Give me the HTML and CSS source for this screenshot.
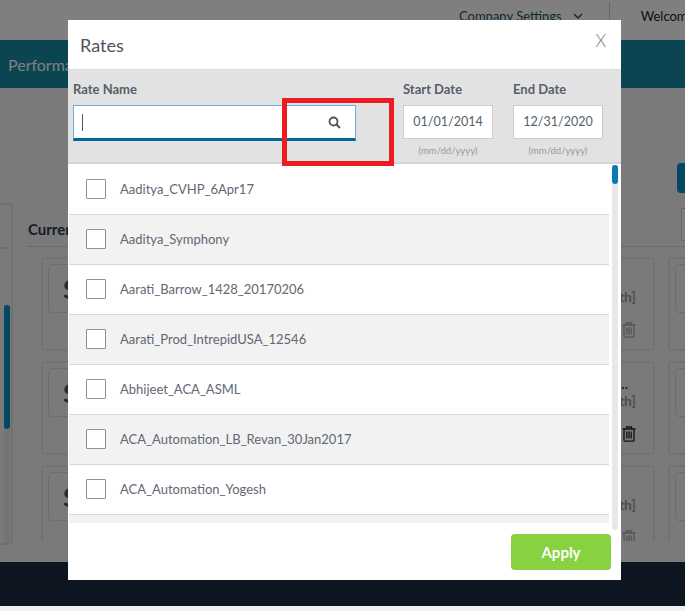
FILE: index.html
```html
<!DOCTYPE html>
<html lang="en">
<head>
    <meta charset="UTF-8">
    <title>Rates</title>
    <link rel="stylesheet" href="styles.css">
</head>
<body>
    <!-- page behind the dialog -->
    <div class="topbar">
        <span class="company">Company Settings</span>
        <svg class="chevron" width="10" height="6" viewBox="0 0 10 6"><path d="M1 1l4 4 4-4" fill="none" stroke="#1c5468" stroke-width="1.4"/></svg>
        <span class="top-sep"></span>
        <span class="welcome">Welcome</span>
    </div>
    <div class="navbar">Performance</div>

    <div class="main">
        <div class="side-panel">
            <div class="side-head"></div>
            <div class="side-track"><div class="side-thumb"></div></div>
        </div>
        <div class="content">
            <div class="toolbar"><span class="toolbar-btn"></span></div>
            <div class="section-head">
                <h2>Current Rates</h2>
                <span class="sort-box"></span>
            </div>
            <div class="cards">
                <div class="card"><div class="card-box">S</div></div>
                <div class="card"><div class="card-box"></div><div class="card-info"><span class="card-name">&nbsp;</span><span class="card-month">[1 Month]</span><svg class="trash faint" viewBox="0 0 14 16"><use href="#trash-icon"/></svg></div></div>
                <div class="card"><div class="card-box"></div></div>
                <div class="card"><div class="card-box">S</div></div>
                <div class="card"><div class="card-box"></div><div class="card-info"><span class="card-name">Rate...</span><span class="card-month">[1 Month]</span><svg class="trash" viewBox="0 0 14 16"><use href="#trash-icon"/></svg></div></div>
                <div class="card"><div class="card-box"></div></div>
                <div class="card"><div class="card-box">S</div></div>
                <div class="card"><div class="card-box"></div><div class="card-info"><span class="card-name">&nbsp;</span><span class="card-month">[1 Month]</span><svg class="trash faint" viewBox="0 0 14 16"><use href="#trash-icon"/></svg></div></div>
                <div class="card"><div class="card-box"></div></div>
            </div>
        </div>
    </div>

    <div class="footer"></div>
    <div class="strip"></div>

    <svg class="icon-defs" width="0" height="0">
        <symbol id="trash-icon" viewBox="0 0 14 16">
            <path d="M4.500 2.500V1h5v1.500M.5 3h13M2 3v11q0 1.200 1.200 1.200h7.600q1.200 0 1.200-1.200V3M4.800 5.500v7M7 5.500v7M9.200 5.500v7" fill="none" stroke="currentColor" stroke-width="1.300"/>
        </symbol>
    </svg>

    <div class="overlay"></div>

    <!-- 弹窗 -->
    <div class="modal">
        <div class="modal-head">
            <span class="modal-title">Rates</span>
            <span class="modal-close">X</span>
        </div>
        <div class="filters">
            <div class="field-name">
                <div class="field-label">Rate Name</div>
                <div class="search-box">
                    <span class="caret"></span>
                    <svg class="search-icon" width="13" height="13" viewBox="0 0 13 13"><circle cx="5.500" cy="5.500" r="4" fill="none" stroke="#4a5560" stroke-width="1.800"/><path d="M8.500 8.500l3.500 3.500" stroke="#4a5560" stroke-width="2"/></svg>
                </div>
            </div>
            <div class="field-date">
                <div class="field-label">Start Date</div>
                <div class="date-box">01/01/2014</div>
                <div class="date-hint">(mm/dd/yyyy)</div>
            </div>
            <div class="field-date">
                <div class="field-label">End Date</div>
                <div class="date-box">12/31/2020</div>
                <div class="date-hint">(mm/dd/yyyy)</div>
            </div>
        </div>
        <div class="rate-list">
            <div class="rate-row"><span class="check"></span>Aaditya_CVHP_6Apr17</div>
            <div class="rate-row"><span class="check"></span>Aaditya_Symphony</div>
            <div class="rate-row"><span class="check"></span>Aarati_Barrow_1428_20170206</div>
            <div class="rate-row"><span class="check"></span>Aarati_Prod_IntrepidUSA_12546</div>
            <div class="rate-row"><span class="check"></span>Abhijeet_ACA_ASML</div>
            <div class="rate-row"><span class="check"></span>ACA_Automation_LB_Revan_30Jan2017</div>
            <div class="rate-row"><span class="check"></span>ACA_Automation_Yogesh</div>
            <div class="rate-row"></div>
        </div>
        <div class="modal-foot"><button class="apply-btn">Apply</button></div>
        <div class="list-track"><div class="list-thumb"></div></div>
    </div>

    <!-- annotation on the screenshot -->
    <div class="red-box"></div>
</body>
</html>
```

FILE: styles.css
```css
* {
    box-sizing: border-box;
}
html, body {
    margin: 0;
    height: 611px;
    overflow: hidden;
}
body {
    position: relative;
    font-family: Lato, "Liberation Sans", sans-serif;
    background: #f4f4f4;
    color: #555f6b;
}
.icon-defs {
    position: absolute;
}

/* page behind */
.topbar {
    height: 40px;
    background: #fff;
    display: flex;
    align-items: center;
    padding: 0 0 8px 459px;
    white-space: nowrap;
    font-size: 13px;
}
.company {
    color: #1c5468;
}
.chevron {
    margin-left: 11px;
    flex-shrink: 0;
}
.top-sep {
    width: 1px;
    height: 28px;
    margin: 0 31px 0 26px;
    flex-shrink: 0;
    background: #ccc;
}
.welcome {
    color: #222;
}
.navbar {
    height: 48px;
    background: #148aa2;
    color: #fff;
    font-size: 16px;
    line-height: 50px;
    padding-left: 8px;
}
.main {
    height: 474px;
    display: flex;
    overflow: hidden;
}
.side-panel {
    width: 13px;
    height: 342px;
    margin-top: 115px;
    margin-right: 15px;
    flex-shrink: 0;
    border-right: 2px solid #e2e2e2;
    border-bottom: 2px solid #e2e2e2;
    border-top: 2px solid #e2e2e2;
    border-radius: 0 3px 3px 0;
}
.side-head {
    height: 44px;
    border-bottom: 2px solid #e2e2e2;
}
.side-track {
    width: 6px;
    height: 238px;
    margin: 56px 0 0 4px;
    background: #e8e8e8;
}
.side-thumb {
    height: 124px;
    background: #0a8fc4;
    border-radius: 3px;
}
.content {
    width: 722px;
    flex-shrink: 0;
}
.toolbar {
    height: 120px;
    padding-top: 75px;
    display: flex;
    justify-content: flex-end;
}
.toolbar-btn {
    width: 73px;
    height: 30px;
    background: #0a8fc4;
    border-radius: 4px;
}
.section-head {
    height: 39px;
    display: flex;
    justify-content: space-between;
    border-bottom: 1px dotted #bbb;
}
.section-head h2 {
    margin: 12px 0 0;
    font-size: 15px;
    font-weight: 700;
    line-height: 18px;
    color: #2b3b50;
}
.sort-box {
    width: 69px;
    height: 33px;
    border: 1px solid #ccc;
    background: #fff;
}
.cards {
    margin: 10px 0 0 13px;
    width: 927px;
    height: 284px;
    overflow: hidden;
    display: grid;
    grid-template-columns: repeat(3, 300.5px);
    grid-auto-rows: 94px;
    gap: 10px 13px;
}
.card {
    border: 2px solid #e4e4e4;
    border-radius: 4px;
    padding: 5px;
    display: flex;
    justify-content: space-between;
}
.card-box {
    width: 120px;
    height: 49px;
    border: 1px solid #dcdcdc;
    border-radius: 4px;
    padding-left: 14px;
    font-size: 26px;
    font-weight: 700;
    line-height: 48px;
    color: #4a5462;
}
.card-info {
    padding-right: 12px;
    display: flex;
    flex-direction: column;
    align-items: flex-end;
    font-size: 14px;
    font-weight: 700;
    line-height: 16px;
    color: #9a9a9a;
}
.card-name {
    height: 17px;
    margin: 8px 8px 0 0;
    color: #1c5468;
}
.card-month {
    height: 16px;
}
.trash {
    width: 14px;
    height: 16px;
    margin-top: 17px;
    color: #222;
}
.trash.faint {
    color: #aaa;
}
.footer {
    height: 44px;
    background: #1a2a40;
}
.strip {
    height: 5px;
    background: #f1f1f1;
}
.overlay {
    position: absolute;
    top: 0;
    left: 0;
    right: 0;
    height: 606px;
    background: rgba(0,0,0,0.5);
}

/* modal */
.modal {
    position: absolute;
    top: 20px;
    left: 68px;
    width: 553px;
    height: 560px;
    background: #fff;
}
.modal-head {
    height: 50px;
    border-bottom: 1px solid #dcdcdc;
    padding: 0 15px 0 12px;
    display: flex;
    justify-content: space-between;
    align-items: center;
}
.modal-title {
    font-size: 18px;
    color: #4a5560;
}
.modal-close {
    font-size: 17px;
    font-weight: 300;
    color: #6f7880;
    margin-top: -8px;
}
.filters {
    height: 94px;
    background: #e2e2e2;
    border-bottom: 2px solid #d6d6d6;
    padding: 10px 0 0 5px;
    display: flex;
}
.field-name {
    width: 283px;
    margin-right: 47px;
}
.field-date {
    width: 90px;
    margin-right: 20px;
}
.field-date:last-child {
    margin-right: 0;
}
.field-label {
    height: 25px;
    font-size: 13px;
    font-weight: 700;
    line-height: 18px;
    color: #555f6b;
}
.search-box {
    height: 36px;
    background: #fff;
    border: 1px solid #6cace0;
    border-bottom: 3px solid #006699;
    padding: 0 14px 0 8px;
    display: flex;
    justify-content: space-between;
    align-items: center;
}
.caret {
    width: 1px;
    height: 17px;
    background: #555;
}
.date-box {
    height: 34px;
    background: #fff;
    border: 1px solid #ccc;
    font-size: 12.5px;
    line-height: 32px;
    text-align: center;
    color: #555f6b;
}
.date-hint {
    margin-top: 6px;
    font-size: 9.5px;
    line-height: 11px;
    text-align: center;
    color: #999;
}
.rate-list {
    height: 358px;
    width: 540px;
    margin: 1px 0 0 1px;
    overflow: hidden;
}
.rate-row {
    height: 50px;
    border-bottom: 1px solid #d8d8d8;
    padding: 0 0 1px 17px;
    display: flex;
    align-items: center;
    font-size: 13px;
    color: #5f6873;
}
.rate-row:nth-child(even) {
    background: #f2f2f2;
}
.check {
    width: 20px;
    height: 20px;
    margin-right: 14px;
    border: 1px solid #8a939b;
    border-radius: 1px;
    background: #fff;
}
.modal-foot {
    padding: 11px 10px 0 0;
    display: flex;
    justify-content: flex-end;
}
.apply-btn {
    width: 100px;
    height: 36px;
    background: #88d141;
    color: #fff;
    border: none;
    border-radius: 4px;
    font-family: inherit;
    font-size: 15px;
    font-weight: 700;
}
.list-track {
    position: absolute;
    top: 145px;
    left: 544px;
    width: 6px;
    height: 365px;
    background: #e8e8e8;
    border-radius: 0 0 3px 3px;
}
.list-thumb {
    height: 19px;
    background: #0a7ab5;
    border-radius: 3px;
}
.red-box {
    position: absolute;
    top: 98px;
    left: 282px;
    width: 112px;
    height: 68px;
    border: 5px solid #ed1c24;
}
```
